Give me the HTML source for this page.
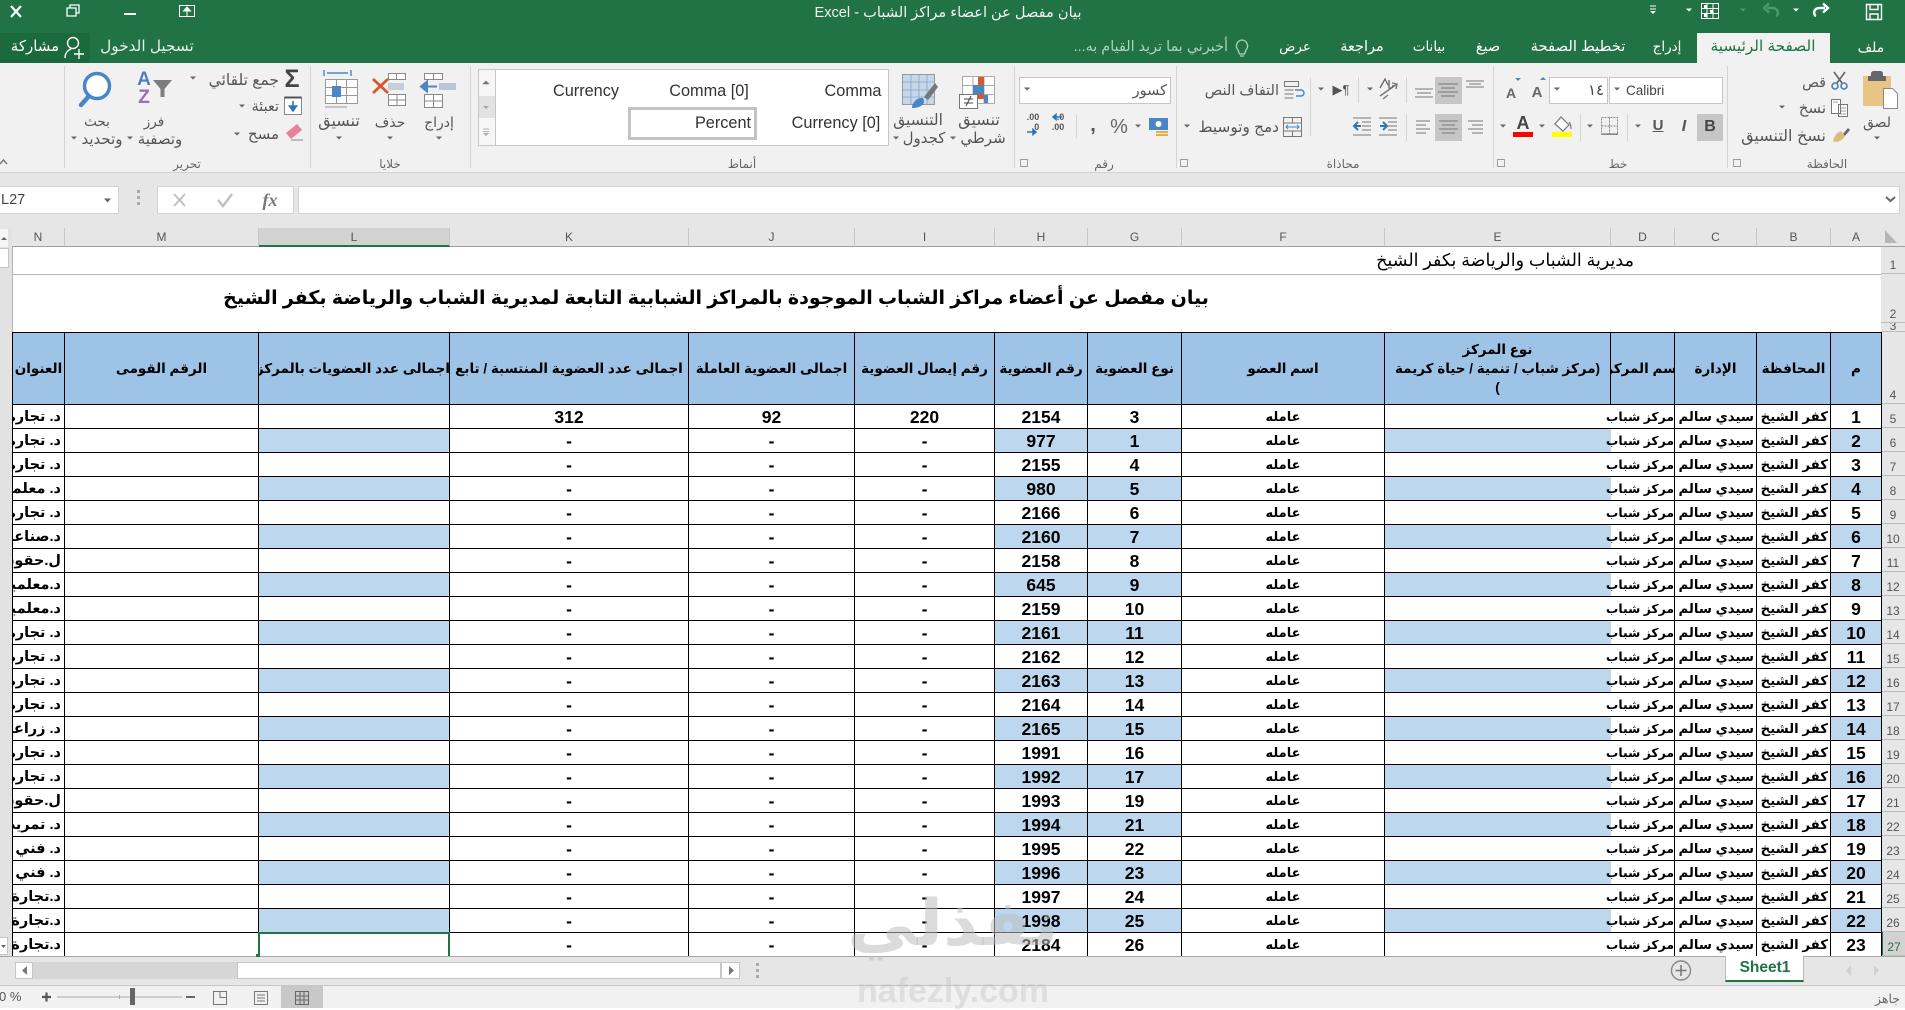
<!DOCTYPE html>
<html lang="ar"><head><meta charset="utf-8"><title>Excel</title>
<style>
html,body{margin:0;padding:0;width:1905px;height:1008px;overflow:hidden;background:#fff;font-family:"Liberation Sans","DejaVu Sans",sans-serif}
.a{position:absolute}
.t,.r,.l{position:absolute;white-space:nowrap;color:#555;font-size:14.5px;line-height:16px}
.t{transform:translate(-50%,-50%)}
.r{transform:translate(-100%,-50%)}
.l{transform:translate(0,-50%)}
.w{color:#fff}
.s{font-family:"Liberation Sans",sans-serif;font-size:16.3px;color:#333}
.g{font-size:12px;color:#666}
#ch{position:absolute;left:12px;top:228px;height:19px;display:flex}
#ch div{box-sizing:border-box;height:19px;border-right:1px solid #c6c6c6;border-bottom:1px solid #a0a0a0;background:#e6e6e6;color:#555;font-size:12px;line-height:18px;text-align:center}
#rh{position:absolute;left:1881px;top:247px;width:24px}
#rh div{box-sizing:border-box;height:24px;background:#e6e6e6;border-bottom:1px solid #bdbdbd;color:#555;font-size:12px;line-height:16px;text-align:center;display:flex;align-items:flex-end;justify-content:center;overflow:hidden}
table{position:absolute;left:12px;top:332px;border-collapse:separate;border-spacing:0;table-layout:fixed;width:1870px}
td,th{box-sizing:border-box;padding:0;height:24px;border-right:1px solid #000;border-bottom:1px solid #000;text-align:center;white-space:nowrap;overflow:hidden;line-height:20px;direction:rtl;color:#000;font-weight:bold;font-size:17.5px;font-family:"Liberation Sans","DejaVu Sans",sans-serif}
th{height:73px;background:#9dc3e6;border-top:1px solid #000;font-size:13.5px;line-height:19px;white-space:nowrap}
td:nth-child(1){font-size:14.5px}
td:nth-child(9){font-size:13px}
td:nth-child(11){font-size:12.4px}
td:nth-child(12),td:nth-child(13){font-size:13.3px}
td:nth-child(1),th:nth-child(1){border-left:1px solid #000}
td:nth-child(1){text-align:right;padding-right:3px}
td:nth-child(10){border-right:0}
td:nth-child(11){text-align:right;overflow:visible;padding-right:1px}
td:nth-child(12),td:nth-child(13){text-align:right;padding-right:2px}
tbody tr:nth-child(even) td:nth-child(3),tbody tr:nth-child(even) td:nth-child(7),tbody tr:nth-child(even) td:nth-child(8),tbody tr:nth-child(even) td:nth-child(10),tbody tr:nth-child(even) td:nth-child(14){background:#bdd7ee}
</style></head><body>

<div class="a" style="left:0;top:0;width:1905px;height:63px;background:#217346"></div>
<div class="a" style="left:0;top:33px;width:90px;height:30px;background:#1b6a3d"></div>
<div class="a" style="left:1697px;top:33px;width:133px;height:30px;background:#f1f1f1"></div>
<div class="a" style="left:0;top:63px;width:1905px;height:109px;background:#f1f1f1;border-bottom:1px solid #d2d2d2"></div>
<div class="a" style="left:0;top:173px;width:1905px;height:55px;background:#e6e6e6"></div>

<!-- formula bar -->
<div class="a" style="left:0;top:186px;width:119px;height:28px;background:#fff;border:1px solid #d4d4d4;border-left:0;box-sizing:border-box"></div>
<div class="a" style="left:157px;top:186px;width:137px;height:28px;background:#fff;border:1px solid #d4d4d4;box-sizing:border-box"></div>
<div class="a" style="left:298px;top:186px;width:1602px;height:28px;background:#fff;border:1px solid #d4d4d4;box-sizing:border-box"></div>
<div class="l" style="left:1px;top:200px;font-size:14.5px;color:#444">L27</div>
<div class="t" style="left:270px;top:200px;font-family:'Liberation Serif',serif;font-style:italic;font-weight:bold;font-size:18px;color:#777">fx</div>

<!-- column headers -->
<div id="ch"><div style="width:53px">N</div><div style="width:194px">M</div><div style="width:191px;background:#d2d2d2;border-bottom:2px solid #217346">L</div><div style="width:239px">K</div><div style="width:166px">J</div><div style="width:140px">I</div><div style="width:93px">H</div><div style="width:94px">G</div><div style="width:203px">F</div><div style="width:226px">E</div><div style="width:64px">D</div><div style="width:82px">C</div><div style="width:74px">B</div><div style="width:51px">A</div></div>
<div class="a" style="left:1881px;top:228px;width:24px;height:19px;background:#e6e6e6;border-bottom:1px solid #a0a0a0;box-sizing:border-box"></div>

<!-- titles rows -->
<div class="a" style="left:13px;top:247px;width:1868px;height:85px;background:#fff"></div>
<div class="a" style="left:13px;top:274px;width:1868px;height:1px;background:#b5b5b5"></div>
<div class="a" style="left:12px;top:247px;width:1px;height:85px;background:#b5b5b5"></div>
<div class="r" dir="rtl" style="left:1634px;top:260px;font-size:17.5px;line-height:22px;color:#000">مديرية الشباب والرياضة بكفر الشيخ</div>
<div class="t" dir="rtl" style="left:716px;top:299px;font-size:19px;font-weight:bold;line-height:26px;color:#000">بيان مفصل عن أعضاء مراكز الشباب الموجودة بالمراكز الشبابية التابعة لمديرية الشباب والرياضة بكفر الشيخ</div>

<!-- row headers -->
<div id="rh"><div style="height:27px">1</div><div style="height:49px">2</div><div style="height:9px;line-height:9px">3</div><div style="height:72px">4</div><div>5</div><div>6</div><div>7</div><div>8</div><div>9</div><div>10</div><div>11</div><div>12</div><div>13</div><div>14</div><div>15</div><div>16</div><div>17</div><div>18</div><div>19</div><div>20</div><div>21</div><div>22</div><div>23</div><div>24</div><div>25</div><div>26</div><div style="background:#d2d2d2;color:#217346;border-left:2px solid #217346">27</div></div>

<table>
<colgroup><col style="width:53px"><col style="width:194px"><col style="width:191px"><col style="width:239px"><col style="width:166px"><col style="width:140px"><col style="width:93px"><col style="width:94px"><col style="width:203px"><col style="width:226px"><col style="width:64px"><col style="width:82px"><col style="width:74px"><col style="width:51px"></colgroup>
<thead><tr><th>العنوان</th><th>الرقم القومى</th><th>اجمالى عدد العضويات بالمركز</th><th>اجمالى عدد العضوية المنتسبة / تابع</th><th>اجمالى العضوية العاملة</th><th>رقم إيصال العضوية</th><th>رقم العضوية</th><th>نوع العضوية</th><th>اسم العضو</th><th>نوع المركز<br>(مركز شباب / تنمية / حياة كريمة<br>)</th><th style="text-align:right"><span style="display:inline-block;margin-right:-6px">اسم المركز</span></th><th>الإدارة</th><th>المحافظة</th><th>م</th></tr></thead>
<tbody>
<tr><td>د. تجارة</td><td></td><td></td><td>312</td><td>92</td><td>220</td><td>2154</td><td>3</td><td>عامله</td><td></td><td>مركز شباب</td><td>سيدي سالم</td><td>كفر الشيخ</td><td>1</td></tr>
<tr><td>د. تجارة</td><td></td><td></td><td>-</td><td>-</td><td>-</td><td>977</td><td>1</td><td>عامله</td><td></td><td>مركز شباب</td><td>سيدي سالم</td><td>كفر الشيخ</td><td>2</td></tr>
<tr><td>د. تجارة</td><td></td><td></td><td>-</td><td>-</td><td>-</td><td>2155</td><td>4</td><td>عامله</td><td></td><td>مركز شباب</td><td>سيدي سالم</td><td>كفر الشيخ</td><td>3</td></tr>
<tr><td>د. معلمين</td><td></td><td></td><td>-</td><td>-</td><td>-</td><td>980</td><td>5</td><td>عامله</td><td></td><td>مركز شباب</td><td>سيدي سالم</td><td>كفر الشيخ</td><td>4</td></tr>
<tr><td>د. تجارة</td><td></td><td></td><td>-</td><td>-</td><td>-</td><td>2166</td><td>6</td><td>عامله</td><td></td><td>مركز شباب</td><td>سيدي سالم</td><td>كفر الشيخ</td><td>5</td></tr>
<tr><td>د.صناعة</td><td></td><td></td><td>-</td><td>-</td><td>-</td><td>2160</td><td>7</td><td>عامله</td><td></td><td>مركز شباب</td><td>سيدي سالم</td><td>كفر الشيخ</td><td>6</td></tr>
<tr><td>ل.حقوق</td><td></td><td></td><td>-</td><td>-</td><td>-</td><td>2158</td><td>8</td><td>عامله</td><td></td><td>مركز شباب</td><td>سيدي سالم</td><td>كفر الشيخ</td><td>7</td></tr>
<tr><td>د.معلمين</td><td></td><td></td><td>-</td><td>-</td><td>-</td><td>645</td><td>9</td><td>عامله</td><td></td><td>مركز شباب</td><td>سيدي سالم</td><td>كفر الشيخ</td><td>8</td></tr>
<tr><td>د.معلمين</td><td></td><td></td><td>-</td><td>-</td><td>-</td><td>2159</td><td>10</td><td>عامله</td><td></td><td>مركز شباب</td><td>سيدي سالم</td><td>كفر الشيخ</td><td>9</td></tr>
<tr><td>د. تجارة</td><td></td><td></td><td>-</td><td>-</td><td>-</td><td>2161</td><td>11</td><td>عامله</td><td></td><td>مركز شباب</td><td>سيدي سالم</td><td>كفر الشيخ</td><td>10</td></tr>
<tr><td>د. تجارة</td><td></td><td></td><td>-</td><td>-</td><td>-</td><td>2162</td><td>12</td><td>عامله</td><td></td><td>مركز شباب</td><td>سيدي سالم</td><td>كفر الشيخ</td><td>11</td></tr>
<tr><td>د. تجارة</td><td></td><td></td><td>-</td><td>-</td><td>-</td><td>2163</td><td>13</td><td>عامله</td><td></td><td>مركز شباب</td><td>سيدي سالم</td><td>كفر الشيخ</td><td>12</td></tr>
<tr><td>د. تجارة</td><td></td><td></td><td>-</td><td>-</td><td>-</td><td>2164</td><td>14</td><td>عامله</td><td></td><td>مركز شباب</td><td>سيدي سالم</td><td>كفر الشيخ</td><td>13</td></tr>
<tr><td>د. زراعة</td><td></td><td></td><td>-</td><td>-</td><td>-</td><td>2165</td><td>15</td><td>عامله</td><td></td><td>مركز شباب</td><td>سيدي سالم</td><td>كفر الشيخ</td><td>14</td></tr>
<tr><td>د. تجارة</td><td></td><td></td><td>-</td><td>-</td><td>-</td><td>1991</td><td>16</td><td>عامله</td><td></td><td>مركز شباب</td><td>سيدي سالم</td><td>كفر الشيخ</td><td>15</td></tr>
<tr><td>د. تجارة</td><td></td><td></td><td>-</td><td>-</td><td>-</td><td>1992</td><td>17</td><td>عامله</td><td></td><td>مركز شباب</td><td>سيدي سالم</td><td>كفر الشيخ</td><td>16</td></tr>
<tr><td>ل.حقوق</td><td></td><td></td><td>-</td><td>-</td><td>-</td><td>1993</td><td>19</td><td>عامله</td><td></td><td>مركز شباب</td><td>سيدي سالم</td><td>كفر الشيخ</td><td>17</td></tr>
<tr><td>د. تمريض</td><td></td><td></td><td>-</td><td>-</td><td>-</td><td>1994</td><td>21</td><td>عامله</td><td></td><td>مركز شباب</td><td>سيدي سالم</td><td>كفر الشيخ</td><td>18</td></tr>
<tr><td>د. فني تجارة</td><td></td><td></td><td>-</td><td>-</td><td>-</td><td>1995</td><td>22</td><td>عامله</td><td></td><td>مركز شباب</td><td>سيدي سالم</td><td>كفر الشيخ</td><td>19</td></tr>
<tr><td>د. فني تجارة</td><td></td><td></td><td>-</td><td>-</td><td>-</td><td>1996</td><td>23</td><td>عامله</td><td></td><td>مركز شباب</td><td>سيدي سالم</td><td>كفر الشيخ</td><td>20</td></tr>
<tr><td>د.تجارة</td><td></td><td></td><td>-</td><td>-</td><td>-</td><td>1997</td><td>24</td><td>عامله</td><td></td><td>مركز شباب</td><td>سيدي سالم</td><td>كفر الشيخ</td><td>21</td></tr>
<tr><td>د.تجارة</td><td></td><td></td><td>-</td><td>-</td><td>-</td><td>1998</td><td>25</td><td>عامله</td><td></td><td>مركز شباب</td><td>سيدي سالم</td><td>كفر الشيخ</td><td>22</td></tr>
<tr><td>د.تجارة</td><td></td><td></td><td>-</td><td>-</td><td>-</td><td>2184</td><td>26</td><td>عامله</td><td></td><td>مركز شباب</td><td>سيدي سالم</td><td>كفر الشيخ</td><td>23</td></tr>
</tbody></table>

<!-- selected cell -->
<div class="a" style="left:258px;top:932px;width:192px;height:25px;box-sizing:border-box;border:2px solid #217346;border-bottom:0"></div>

<!-- left scrollbar -->
<div class="a" style="left:0;top:228px;width:12px;height:728px;background:#e2e2e2"></div>
<div class="a" style="left:0;top:229px;width:8px;height:18px;background:#f6f6f6"></div>
<div class="a" style="left:0;top:248px;width:9px;height:20px;background:#fff;border:1px solid #c6c6c6;border-left:0;box-sizing:border-box"></div>
<div class="a" style="left:0;top:937px;width:8px;height:18px;background:#fff;border:1px solid #c6c6c6;border-left:0;box-sizing:border-box"></div>

<!-- sheet bar / status -->
<div class="a" style="left:0;top:956px;width:1905px;height:29px;background:#e6e6e6;border-top:1px solid #a8a8a8;box-sizing:border-box"></div>
<div class="a" style="left:0;top:985px;width:1905px;height:23px;background:#f1f1f1;border-top:1px solid #c6c6c6;box-sizing:border-box"></div>
<div class="a" style="left:15px;top:962px;width:222px;height:17px;background:#d6d6d6"></div>
<div class="a" style="left:15px;top:962px;width:18px;height:17px;background:#fff;border:1px solid #c6c6c6;box-sizing:border-box"></div>
<div class="a" style="left:237px;top:962px;width:484px;height:17px;background:#fff;border:1px solid #c6c6c6;box-sizing:border-box"></div>
<div class="a" style="left:721px;top:962px;width:19px;height:17px;background:#fff;border:1px solid #c6c6c6;box-sizing:border-box"></div>
<div class="a" style="left:1725px;top:956px;width:79px;height:26px;background:#fff;border-bottom:2px solid #217346;box-sizing:border-box;border-left:1px solid #bbb;border-right:1px solid #bbb"></div>
<div class="t" style="left:1765px;top:968px;font-size:15.5px;font-weight:bold;color:#217346">Sheet1</div>
<div class="a" style="left:281px;top:986px;width:42px;height:22px;background:#c8c8c8"></div>
<div class="r" style="left:1900px;top:999px;font-size:12.5px;color:#666">جاهز</div>
<div class="l" style="left:-1px;top:997px;font-size:13px;color:#555">0 %</div>

<!-- tabs -->
<div class="t w" style="left:1871px;top:47px;font-size:14px">ملف</div>
<div class="t" style="left:1763px;top:47px;font-size:15.3px;color:#217346">الصفحة الرئيسية</div>
<div class="t w" style="left:1667px;top:47px;font-size:13.5px">إدراج</div>
<div class="t w" style="left:1578px;top:47px;font-size:14.8px">تخطيط الصفحة</div>
<div class="t w" style="left:1488px;top:47px;font-size:14.5px">صيغ</div>
<div class="t w" style="left:1429px;top:47px;font-size:13.5px">بيانات</div>
<div class="t w" style="left:1362px;top:47px;font-size:14.5px">مراجعة</div>
<div class="t w" style="left:1295px;top:47px;font-size:13.5px">عرض</div>
<div class="r" dir="rtl" style="left:1228px;top:47px;font-size:14.4px;color:#a9d4bc">أخبرني بما تريد القيام به...</div>
<div class="t" style="left:147px;top:47px;font-size:15.3px;color:#e3f0e8">تسجيل الدخول</div>
<div class="t w" style="left:35px;top:47px;font-size:15px">مشاركة</div>
<div class="t" dir="rtl" style="left:948px;top:13px;font-size:14.6px;color:#f2f2f2">بيان مفصل عن اعضاء مراكز الشباب - Excel</div>

<!-- ribbon text: editing -->
<div class="r" style="left:279px;top:81px;font-size:15.5px">جمع تلقائي</div>
<div class="r" style="left:279px;top:107px;font-size:14.5px">تعبئة</div>
<div class="r" style="left:279px;top:135px;font-size:15px">مسح</div>
<div class="t" style="left:97px;top:122px;font-size:13.5px">بحث</div>
<div class="t" style="left:102px;top:140px;font-size:15px">وتحديد</div>
<div class="t" style="left:154px;top:122px;font-size:13.5px">فرز</div>
<div class="t" style="left:160px;top:140px;font-size:15px">وتصفية</div>
<div class="t g" style="left:187px;top:164px">تحرير</div>
<div class="t" style="left:339px;top:122px;font-size:16px">تنسيق</div>
<div class="t" style="left:390px;top:122px;font-size:14px">حذف</div>
<div class="t" style="left:439px;top:122px;font-size:14px">إدراج</div>
<div class="t g" style="left:390px;top:164px">خلايا</div>
<div class="t" style="left:144px;top:80px;font-size:19px;font-weight:bold;color:#4f81bd">A</div>
<div class="t" style="left:144px;top:98px;font-size:19px;font-weight:bold;color:#9b6bb3">Z</div>
<div class="t" style="left:292px;top:79px;font-size:25px;font-weight:bold;color:#444">Σ</div>

<!-- styles -->
<div class="a" style="left:478px;top:69px;width:411px;height:77px;background:#fff;border:1px solid #c6c6c6;box-sizing:border-box"></div>
<div class="a" style="left:479px;top:70px;width:16px;height:75px;background:#f6f6f6;border-right:1px solid #c6c6c6"></div>
<div class="a" style="left:479px;top:96px;width:16px;height:22px;background:#e2e2e2"></div>
<div class="a" style="left:628px;top:107px;width:129px;height:33px;border:3px solid #c3c3c3;box-sizing:border-box"></div>
<div class="t s" style="left:586px;top:91px">Currency</div>
<div class="t s" style="left:709px;top:91px">Comma [0]</div>
<div class="t s" style="left:853px;top:91px">Comma</div>
<div class="t s" style="left:723px;top:123px">Percent</div>
<div class="t s" style="left:836px;top:123px">Currency [0]</div>
<div class="t g" style="left:742px;top:164px">أنماط</div>
<div class="t" style="left:918px;top:121px;font-size:15.5px">التنسيق</div>
<div class="t" style="left:924px;top:139px;font-size:15px">كجدول</div>
<div class="t" style="left:979px;top:121px;font-size:16px">تنسيق</div>
<div class="t" style="left:983px;top:139px;font-size:15px">شرطي</div>

<!-- number -->
<div class="a" style="left:1019px;top:77px;width:152px;height:27px;background:#fff;border:1px solid #c6c6c6;box-sizing:border-box"></div>
<div class="r" style="left:1167px;top:91px">كسور</div>
<div class="t" style="left:1119px;top:127px;font-size:20px;color:#666">%</div>
<div class="t" style="left:1093px;top:125px;font-size:20px;font-weight:bold;color:#555">,</div>
<div class="t g" style="left:1104px;top:164px">رقم</div>
<div class="t" style="left:1058px;top:122px;font-size:9px;line-height:10px;font-weight:bold;color:#555">&nbsp;&nbsp;.0<br>.00</div>
<div class="t" style="left:1033px;top:122px;font-size:9px;line-height:10px;font-weight:bold;color:#555">.00<br>&nbsp;&nbsp;.0</div>

<!-- alignment -->
<div class="a" style="left:1435px;top:77px;width:27px;height:27px;background:#c6c6c6"></div>
<div class="a" style="left:1435px;top:114px;width:27px;height:27px;background:#c6c6c6"></div>
<div class="r" style="left:1279px;top:91px;font-size:14.5px">التفاف النص</div>
<div class="r" style="left:1279px;top:128px;font-size:15.3px">دمج وتوسيط</div>
<div class="t g" style="left:1343px;top:164px">محاذاة</div>
<div class="t" style="left:1341px;top:90px;font-size:13px;color:#555">&#9654;&#182;</div>

<!-- font -->
<div class="a" style="left:1609px;top:77px;width:114px;height:27px;background:#fff;border:1px solid #c6c6c6;box-sizing:border-box"></div>
<div class="a" style="left:1549px;top:77px;width:59px;height:27px;background:#fff;border:1px solid #c6c6c6;box-sizing:border-box"></div>
<div class="l" style="left:1626px;top:91px;font-size:13.5px;color:#444">Calibri</div>
<div class="t" style="left:1596px;top:91px;font-size:15px;color:#444">١٤</div>
<div class="t" style="left:1537px;top:93px;font-size:15px;font-weight:bold;color:#666">A</div>
<div class="t" style="left:1511px;top:93px;font-size:14px;font-weight:bold;color:#666">A</div>
<div class="a" style="left:1697px;top:114px;width:26px;height:27px;background:#c6c6c6"></div>
<div class="t" style="left:1710px;top:127px;font-size:16px;font-weight:bold;color:#444">B</div>
<div class="t" style="left:1684px;top:127px;font-size:16px;font-weight:bold;font-style:italic;color:#555">I</div>
<div class="t" style="left:1658px;top:126px;font-size:15px;font-weight:bold;color:#555;text-decoration:underline">U</div>
<div class="t" style="left:1523px;top:123px;font-size:18px;font-weight:bold;color:#444">A</div>
<div class="t g" style="left:1618px;top:164px">خط</div>

<!-- clipboard -->
<div class="t" style="left:1877px;top:122px;font-size:14px">لصق</div>
<div class="r" style="left:1826px;top:82px;font-size:14px">قص</div>
<div class="r" style="left:1826px;top:109px;font-size:15px">نسخ</div>
<div class="r" style="left:1826px;top:137px;font-size:16px">نسخ التنسيق</div>
<div class="t g" style="left:1827px;top:164px">الحافظة</div>

<svg class="a" style="left:0;top:0" width="1905" height="1008" viewBox="0 0 1905 1008" fill="none">
<!-- window controls -->
<path d="M11 6l10 11M21 6L11 17" stroke="#fff" stroke-width="2.2"/>
<path d="M70 8V5h9v8h-3M67 8h9v8h-9z" stroke="#fff" stroke-width="1.3"/>
<path d="M124 14h12" stroke="#fff" stroke-width="2"/>
<path d="M179.500 5.500h15v11h-15z" stroke="#fff"/><path d="M187 16V9M183.500 11l3.500-4 3.500 4z" stroke="#fff" fill="#fff"/>
<!-- QAT -->
<path d="M1866.500 4.500h15v15h-15zM1870 4.500v5h8v-5M1870 19v-5h8v5" stroke="#fff" stroke-width="1.4"/>
<path d="M1816 16c-3-1-3-8 4-8h5M1823 3.500l5 4.500-5 4.500" stroke="#fff" stroke-width="2.4"/>
<path d="M1776 16c3-1 3-8-4-8h-5M1769 3.500l-5 4.500 5 4.500" stroke="#4d9a70" stroke-width="2.4"/>
<path d="M1701.500 3.500h17v15h-17zM1701.500 8.500h17M1701.500 13.500h17M1707 3.500v15M1713 3.500v15" stroke="#fff"/>
<path d="M1704 5h3v3h-3zM1710 10h3v3h-3zM1704 14h3v3h-3z" fill="#fff"/>
<path d="M1686 8.500h6l-3 3zM1793 8.500h6l-3 3z" fill="#fff"/><path d="M1740 8.500h6l-3 3z" fill="#4d9a70"/>
<path d="M1650 6h6M1650 9h6" stroke="#fff"/><path d="M1650 11h6l-3 3z" fill="#fff"/>
<!-- bulb and person -->
<path d="M1242 40a6 6 0 0 1 4 10l-1.500 4h-5l-1.500-4a6 6 0 0 1 4-10zM1240 56h4" stroke="#a9d4bc" stroke-width="1.300"/>
<circle cx="73" cy="43" r="5.500" stroke="#fff" stroke-width="1.400"/><path d="M65 58c0-5 3-8 6-9M74 54h10M79 49v10" stroke="#fff" stroke-width="1.400"/>
<!-- group separators -->
<path d="M64.500 66v102M310.500 66v102M470.500 66v102M1014.500 66v102M1176.500 66v102M1493.500 66v102M1727.500 66v102" stroke="#d4d4d4"/>
<path d="M1076.500 115v23M1310.500 78v58M1358.500 77v26M1406.500 77v26M1406.500 114v27M1580.500 114v27M1627.500 114v27" stroke="#d4d4d4"/>
<!-- chevron -->
<path d="M0 164l3.500-4 3.500 4" stroke="#777" stroke-width="1.400"/>
<!-- dropdown arrows -->
<path fill="#666" d="M190 76.500h6l-3 3zM239 104.500h6l-3 3zM234 132.500h6l-3 3zM71 136.500h6l-3 3zM127 136.500h6l-3 3zM336 136.500h6l-3 3zM387 136.500h6l-3 3zM436 136.500h6l-3 3zM893 136.500h6l-3 3zM950 136.500h6l-3 3zM1024 87.500h6l-3 3zM1135 124.500h6l-3 3zM1184 124.500h6l-3 3zM1318 87.500h6l-3 3zM1367 87.500h6l-3 3zM1554 87.500h6l-3 3zM1614 87.500h6l-3 3zM1635 124.500h6l-3 3zM1587 124.500h6l-3 3zM1539 124.500h6l-3 3zM1500 124.500h6l-3 3zM1874 136.500h6l-3 3zM1779 105.500h6l-3 3zM104 198.500h7l-3.500 4z"/>
<!-- search -->
<circle cx="97" cy="86" r="12.500" fill="#fff" stroke="#4a86c5" stroke-width="3.500"/><path d="M89 96l-8 9" stroke="#4a86c5" stroke-width="4.500" stroke-linecap="round"/>
<!-- funnel -->
<path d="M153 80h19l-7.500 9v8h-4v-8z" fill="#7d7d7d"/>
<!-- fill icon -->
<path d="M284.500 97.500h17v17h-17z" fill="#fff" stroke="#888"/><path d="M284.500 97.500h17" stroke="#555" stroke-width="2"/><path d="M293 101v8M289.500 106l3.500 5 3.500-5z" stroke="#2e75b6" stroke-width="1.600" fill="#2e75b6"/>
<!-- eraser -->
<path d="M286 133l11-9 5 6-11 9z" fill="#e8819a"/><path d="M291 140h12" stroke="#888"/>
<!-- format cells -->
<path d="M325.500 79.500h32v24h-32zM325.500 87.500h32M325.500 95.500h32M336.500 79.500v24M346.500 79.500v24" stroke="#999" fill="#fff"/><path d="M332 86h9v11h-9z" fill="#4a86c5"/>
<path d="M324 70v6M351 70v6M327 73h21" stroke="#2e75b6" stroke-width="1.200"/>
<path d="M325 107h22" stroke="#999"/>
<!-- delete -->
<path d="M388.500 73.500h17v6h-17zM396.500 73.500v6M388.500 94.500h17v11h-17zM388.500 100h17M397 94.500v11" stroke="#888" fill="#fff"/>
<path d="M388 83h16v7h-16z" fill="#c5cfdc"/><path d="M373 79l15 14M388 79l-15 14" stroke="#d9582b" stroke-width="2.800"/>
<!-- insert -->
<path d="M424.500 73.500h18v6h-18zM433.500 73.500v6M424.500 94.500h18v13h-18zM424.500 101h18M433.500 94.500v13" stroke="#888" fill="#fff"/>
<path d="M439 83h17v7h-17z" fill="#b8c6d8"/><path d="M437 86.500h-12M427 81.500l-6 5 6 5z" stroke="#4a86c5" stroke-width="2" fill="#4a86c5"/>
<!-- gallery arrows -->
<path d="M483 84l3-3 3 3zM483 129h6M483 131.500h6" fill="#777" stroke="#777" stroke-width=".6"/><path d="M483 106h6l-3 3zM483 133h6l-3 3z" fill="#aaa"/>
<!-- format as table -->
<path d="M902.500 74.500h32v30h-32z" fill="#c5d7ec" stroke="#999"/><path d="M902.500 82h32M902.500 90h32M902.500 97h32M911 74.500v30M919 74.500v30M927 74.500v30" stroke="#8ea4bd" stroke-width=".8"/>
<path d="M938 87l-10 13-4-3 11-14z" fill="#777"/><path d="M912 108c0-6 6-11 11-10l1 3c0 5-6 7-12 7z" fill="#4a86c5"/>
<!-- conditional -->
<path d="M962.500 76.500h32v27h-32z" fill="#fff" stroke="#aaa"/><path d="M962.500 85.500h32M962.500 94.500h32M973 76.500v27M984 76.500v27" stroke="#aaa"/>
<path d="M978 77h6v8h-6z" fill="#d9582b"/><path d="M973 85h11v9h-11z" fill="#4a86c5"/><path d="M978 94h6v5h-6z" fill="#d9582b"/><path d="M984 95h4v8h-4z" fill="#4a86c5"/>
<path d="M959.500 94.500h18v14h-18z" fill="#fff" stroke="#777"/><path d="M964 99h9M964 103h9M966 106l5-10" stroke="#444"/>
<!-- currency -->
<path d="M1149 118h19v12h-19z" fill="#4a86c5"/><circle cx="1158.500" cy="124" r="3" fill="#fff"/><path d="M1156 131h12v2h-12zM1156 134h12v2h-12z" fill="#e0b040"/>
<!-- decimals arrows -->
<path d="M1062 117h-8M1056 114.500l-3 2.500 3 2.500z" stroke="#2e75b6" stroke-width="1.500"/>
<path d="M1027 132h8M1033 129.500l3 2.500-3 2.500z" stroke="#2e75b6" stroke-width="1.500"/>
<!-- launchers -->
<path d="M1020.500 159.500h7v7h-7zM1180.500 159.500h7v7h-7zM1497.500 159.500h7v7h-7zM1733.500 159.500h7v7h-7z" stroke="#999" stroke-width=".9"/>
<!-- wrap / merge -->
<path d="M1284.500 81.500h14v5h-14zM1284.500 90h9M1284.500 94h9M1284.500 98h9" stroke="#777"/><path d="M1295 90h6a3 3 0 0 1 0 6h-5" stroke="#4a86c5" stroke-width="1.500"/>
<path d="M1283.500 117.500h18v19h-18zM1283.500 123h18M1283.500 131h18M1292.500 117.500v5M1292.500 131v5" stroke="#777"/><path d="M1286 127h13M1288 125l-2 2 2 2M1297 125l2 2-2 2" stroke="#4a86c5"/>
<!-- text direction -->
<path d="M1380 96l17-12M1392 83l5 1-1 5M1383 99l5-4" stroke="#777" stroke-width="1.400"/>
<path d="M1380 88l5-9 3 6M1389 80v8a3 3 0 0 0 4-3" stroke="#666" stroke-width="1.300"/>
<!-- vertical align -->
<path d="M1415 89h18M1417 93h14M1415 97h18M1438 84h20M1441 88h14M1438 92h20M1441 96h14M1466 81h18M1469 84h12M1466 87h18" stroke="#777"/>
<!-- horizontal align -->
<path stroke="#777" d="M1416 121h14M1416 125h10M1416 129h14M1416 133h10M1439 121h19M1442 125h13M1439 129h19M1442 133h13M1468 121h15M1472 125h11M1468 129h15M1472 133h11"/>
<!-- indent -->
<path stroke="#777" d="M1353 118h18M1362 122h9M1362 126h9M1362 130h9M1353 135h18M1379 118h18M1379 135h18M1388 122h9M1388 126h9M1388 130h9"/>
<path d="M1361 126h-6M1358 122l-4 4 4 4M1380 126h6M1383 122l4 4-4 4" stroke="#2e75b6" stroke-width="2"/>
<!-- grow/shrink carets -->
<path d="M1540 80l3-3 3 3z" fill="#4a86c5"/><path d="M1515 78l3 3 3-3z" fill="#4a86c5"/>
<!-- color bars -->
<path d="M1513 132h20v5h-20z" fill="#f00"/><path d="M1552 132h20v5h-20z" fill="#ff0"/>
<path d="M1561 117l8 8-6 6-8-7zM1569 122c2 2 2 5 2 7" stroke="#777" fill="#fff" stroke-width="1.200"/>
<!-- borders -->
<path d="M1601.500 117.500h16v17h-16zM1601.500 126h16M1609.500 117.500v17" stroke="#888" stroke-dasharray="2 1"/>
<path d="M1602 134h16" stroke="#666"/>
<!-- paste -->
<path d="M1863 76h28v30h-28z" fill="#e8c583"/><path d="M1871 76v-3a3 3 0 0 1 3-2h6a3 3 0 0 1 3 2v3h3v5h-18v-5z" fill="#666"/>
<path d="M1883.500 88.500h9l5 5v15h-14z" fill="#fff" stroke="#888"/>
<!-- scissors -->
<path d="M1834 72l8 11M1845 72l-8 11" stroke="#666" stroke-width="1.600"/><circle cx="1835" cy="86" r="3" stroke="#4a7ebb" stroke-width="1.600"/><circle cx="1844" cy="86" r="3" stroke="#4a7ebb" stroke-width="1.600"/>
<!-- copy -->
<path d="M1831.500 99.500h9v14h-9zM1838.500 104.500h9v12h-9z" fill="#fff" stroke="#777"/><path d="M1840 108h6M1840 111h6M1840 114h6M1833 102h5" stroke="#777" stroke-width=".8"/>
<!-- painter -->
<path d="M1842 135l6-7 2 2-6 7z" fill="#666"/><path d="M1833 141c1-4 3-8 8-10l4 5c-3 5-8 7-12 5z" fill="#d9bd7e"/>
<!-- formula bar -->
<path d="M137 190h3v3h-3zM137 196h3v3h-3zM137 202h3v3h-3z" fill="#aaa"/>
<path d="M174 194l11 12M185 194l-11 12" stroke="#bdbdbd" stroke-width="1.700"/>
<path d="M218 200l5 6 9-12" stroke="#bdbdbd" stroke-width="2.300"/>
<path d="M1886 197l4.500 4 4.500-4" stroke="#666" stroke-width="2"/>
<!-- corner triangle -->
<path d="M1885 230l12 13h-12z" fill="#b5b5b5"/>
<!-- left scroll arrows -->
<path d="M1 240l3-3 3 3z" fill="#666"/><path d="M1 945h5l-2.500 3z" fill="#666"/>
<!-- horizontal scroll arrows -->
<path d="M27 966v9l-5-4.500zM729 966v9l5-4.500z" fill="#777"/>
<path d="M756 963h3v3h-3zM756 969h3v3h-3zM756 975h3v3h-3z" fill="#aaa"/>
<circle cx="1681" cy="970.500" r="9.500" stroke="#888" stroke-width="1.400"/><path d="M1681 965v11M1675.500 970.500h11" stroke="#777" stroke-width="1.500"/>
<path d="M1851 965v11l-5-5.500zM1874 965v11l5-5.500z" fill="#d0d0d0"/>
<!-- selection handle -->
<path d="M256 954h4v3h-4z" fill="#217346"/>
<!-- status -->
<path d="M42 997h9M46.500 992.500v9" stroke="#555" stroke-width="2.200"/><path d="M57 997h125M119.500 995v4" stroke="#aaa"/><path d="M130 988h5v17h-5z" fill="#666"/><path d="M186 997h9" stroke="#666" stroke-width="2"/>
<path d="M213.500 991.500h13v13h-13zM220 991.500v6h6.500" stroke="#777"/>
<path d="M254.500 991.500h13v13h-13zM257 995h8M257 998h8M257 1001h8" stroke="#777"/>
<path d="M295.500 991.500h13v13h-13zM295.500 996h13M295.500 1000h13M300 991.500v13M304 991.500v13" stroke="#666"/>
</svg>

<!-- watermark -->
<div class="a" style="left:848px;top:888px;width:210px;height:70px;text-align:center;font-size:64px;font-weight:bold;color:rgba(190,190,190,.55);line-height:70px;white-space:nowrap;transform:scaleX(1.08)">نفذلي</div>
<div class="t" style="left:953px;top:991px;font-size:34px;font-weight:bold;color:rgba(185,185,185,.35);line-height:36px">nafezly.com</div>
</body></html>
